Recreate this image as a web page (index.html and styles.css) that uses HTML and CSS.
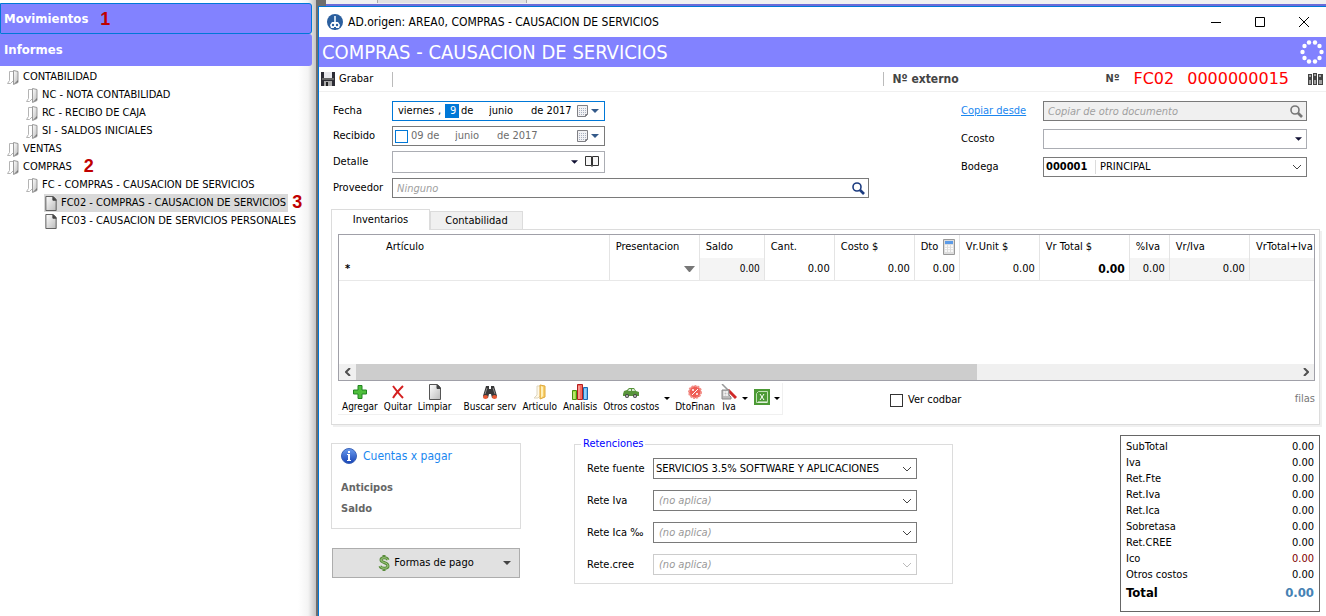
FILE: index.html
```html
<!DOCTYPE html>
<html lang="es">

<head>
  <meta charset="UTF-8">
  <meta name="viewport" content="width=device-width, initial-scale=1.0">
  <title>COMPRAS - CAUSACION DE SERVICIOS</title>
  <link rel="stylesheet" href="styles.css">
</head>

<body>
  <!-- iconos compartidos -->
  <svg class="sprite" aria-hidden="true">
    <defs>
      <linearGradient id="gris" x1="0" x2="1" y1="0" y2="1">
        <stop offset="0" stop-color="#fff"/>
        <stop offset="1" stop-color="#bbb"/>
      </linearGradient>
      <linearGradient id="azul" x1="0" x2="0" y1="0" y2="1">
        <stop offset="0" stop-color="#6a9cf0"/>
        <stop offset="1" stop-color="#1743b5"/>
      </linearGradient>
      <symbol id="i-folder" viewBox="0 0 12 15">
        <path d="M2.500 1.500h4v9l-3 3h-3l2-3z" fill="#fff" stroke="#b4b4b4"/>
        <path d="M6.500.500l4.500 1v11l-4.500 2z" fill="url(#gris)" stroke="#9a9a9a"/>
        <path d="M7 14l4-2v-2z" fill="#777"/>
      </symbol>
      <symbol id="i-page" viewBox="0 0 14 16">
        <path d="M1.500.500h8l3 3v12h-11z" fill="url(#gris)" stroke="#555"/>
        <path d="M9 1v3.500h3.500z" fill="#444" stroke="#444"/>
      </symbol>
      <symbol id="i-chevron" viewBox="0 0 10 6">
        <path d="M1 1l4 4 4-4" fill="none" stroke="currentColor"/>
      </symbol>
      <symbol id="i-arrow" viewBox="0 0 8 4">
        <path d="M0 0h8L4 4z" fill="currentColor"/>
      </symbol>
      <symbol id="i-calendar" viewBox="0 0 12 13">
        <path d="M.5.500h10v9l-2 2h-8z" fill="#f2f2f4" stroke="#7f7f84"/>
        <path d="M2 3.500h7M2 5.500h7M2 7.500h7M2 9.500h5" stroke="#a8b0c0" stroke-dasharray="1 1" fill="none"/>
        <path d="M8.500 11.500v-2h2" fill="none" stroke="#7f7f84"/>
      </symbol>
      <symbol id="i-search" viewBox="0 0 13 13">
        <circle cx="5" cy="5" r="4" fill="none" stroke="currentColor" stroke-width="1.6"/>
        <path d="M8 8l4 4" stroke="currentColor" stroke-width="2.6"/>
      </symbol>
    </defs>
  </svg>

  <nav class="sidebar">
    <button class="section active">Movimientos <span class="step">1</span></button>
    <button class="section">Informes</button>
    <ul class="tree">
      <li><a href="#"><svg class="ico"><use href="#i-folder"/></svg>CONTABILIDAD</a>
        <ul>
          <li><a href="#"><svg class="ico"><use href="#i-folder"/></svg>NC - NOTA CONTABILIDAD</a></li>
          <li><a href="#"><svg class="ico"><use href="#i-folder"/></svg>RC - RECIBO DE CAJA</a></li>
          <li><a href="#"><svg class="ico"><use href="#i-folder"/></svg>SI - SALDOS INICIALES</a></li>
        </ul>
      </li>
      <li><a href="#"><svg class="ico"><use href="#i-folder"/></svg>VENTAS</a></li>
      <li><a href="#"><svg class="ico"><use href="#i-folder"/></svg>COMPRAS</a><span class="step">2</span>
        <ul>
          <li><a href="#"><svg class="ico"><use href="#i-folder"/></svg>FC - COMPRAS - CAUSACION DE SERVICIOS</a>
            <ul>
              <li><a href="#" class="selected"><svg class="ico"><use href="#i-page"/></svg>FC02 - COMPRAS - CAUSACION DE SERVICIOS</a><span class="step near">3</span></li>
              <li><a href="#"><svg class="ico"><use href="#i-page"/></svg>FC03 - CAUSACION DE SERVICIOS PERSONALES</a></li>
            </ul>
          </li>
        </ul>
      </li>
    </ul>
  </nav>

  <div class="desktop">
    <div class="behind"><div class="behind-tab"></div></div>
    <main class="window">
      <header class="titlebar">
        <svg class="app-logo" width="16" height="16" viewBox="0 0 16 16">
          <circle cx="8" cy="8" r="8" fill="#2b5f9e"/>
          <path d="M7.500 2v7M8.500 2v7" stroke="#c5d8ec" fill="none"/>
          <path d="M5 8h6l2 3-1 3H4l-1-3z" fill="#fff"/>
          <circle cx="6" cy="11" r="1.200" fill="#2b5f9e"/>
          <circle cx="10" cy="11" r="1.200" fill="#2b5f9e"/>
          <path d="M7 13h2v3H7z" fill="#2b5f9e"/>
        </svg>
        <span class="caption">AD.origen: AREA0, COMPRAS - CAUSACION DE SERVICIOS</span>
        <div class="win-buttons">
          <button aria-label="Minimizar"><svg width="11" height="11"><path d="M0 5.500h10" stroke="#000"/></svg></button>
          <button aria-label="Maximizar"><svg width="11" height="11"><path d="M.5.500h9v9h-9z" fill="none" stroke="#000"/></svg></button>
          <button aria-label="Cerrar"><svg width="11" height="11"><path d="M0 0l10 10M10 0L0 10" stroke="#000"/></svg></button>
        </div>
      </header>

      <div class="banner">
        <h1>COMPRAS - CAUSACION DE SERVICIOS</h1>
        <svg width="24" height="24" viewBox="0 0 24 24" fill="#fff">
          <circle cx="9" cy="2.500" r="2.200"/><circle cx="15" cy="2.500" r="2.200"/>
          <circle cx="19.500" cy="6" r="2.200"/><circle cx="21.500" cy="12" r="2.200"/>
          <circle cx="19.500" cy="18" r="2.200"/><circle cx="15" cy="21.500" r="2.200"/>
          <circle cx="9" cy="21.500" r="2.200"/><circle cx="4.500" cy="18" r="2.200"/>
          <circle cx="2.500" cy="12" r="2.200"/><circle cx="4.500" cy="6" r="2.200"/>
        </svg>
      </div>

      <div class="topbar">
        <button class="save">
          <svg width="14" height="14" viewBox="0 0 14 14">
            <path d="M0 0h14v14H0z" fill="#2c2c34"/>
            <path d="M3 0h8v6H3z" fill="#e8e8ec"/>
            <path d="M3 9h8v5H3z" fill="#aaa"/>
            <path d="M5 10h2v4H5z" fill="#222"/>
            <path d="M1 6h12v2H1z" fill="#666"/>
          </svg>
          Grabar
        </button>
        <div class="externo">Nº externo</div>
        <div class="numero">Nº</div>
        <div class="doc"><span>FC02</span><span>0000000015</span></div>
        <svg class="books" width="15" height="12" viewBox="0 0 15 12">
          <path d="M0 1h4v11H0zM5 0h4v12H5zM10 1h5v11h-5z" fill="#444"/>
          <path d="M1 3h2M6 2h2M11 3h2M1 8h2M6 8h2M11 8h3M1 10h2M6 10h2M11 10h3" stroke="#fff"/>
        </svg>
      </div>

      <form class="data">
        <div class="col-left">
          <label for="fecha-dia">Fecha</label>
          <div class="field date focus">
            <input class="weekday" value="viernes" aria-label="Día de la semana"><span class="comma">,</span>
            <input id="fecha-dia" class="day marked" value="9"><span class="de">de</span>
            <input class="month" value="junio" aria-label="Mes"><span>de</span>
            <input class="year" value="2017" aria-label="Año">
            <button type="button" class="pick" aria-label="Calendario"><svg width="12" height="13"><use href="#i-calendar"/></svg><svg width="8" height="4"><use href="#i-arrow"/></svg></button>
          </div>

          <label for="recibido">Recibido</label>
          <div class="field date off">
            <input type="checkbox" id="recibido">
            <input class="day" value="09" aria-label="Día"><span class="de">de</span>
            <input class="month" value="junio" aria-label="Mes"><span>de</span>
            <input class="year" value="2017" aria-label="Año">
            <button type="button" class="pick" aria-label="Calendario"><svg width="12" height="13"><use href="#i-calendar"/></svg><svg width="8" height="4"><use href="#i-arrow"/></svg></button>
          </div>

          <label for="detalle">Detalle</label>
          <div class="field soft detail">
            <select id="detalle"><option></option></select>
            <svg class="mark" width="7" height="4"><use href="#i-arrow"/></svg>
            <button type="button" class="book" aria-label="Detalles">
              <svg width="15" height="12" viewBox="0 0 15 12"><path d="M.5.500h6v9h-6zM7.500.500h6v9h-6zM7 1v10" fill="#f6f6f6" stroke="#333"/></svg>
            </button>
          </div>

          <label for="proveedor">Proveedor</label>
          <div class="field wide">
            <input id="proveedor" placeholder="Ninguno">
            <button type="button" class="find" aria-label="Buscar proveedor"><svg width="13" height="13"><use href="#i-search"/></svg></button>
          </div>
        </div>

        <div class="col-right">
          <a href="#">Copiar desde</a>
          <div class="field copy">
            <input placeholder="Copiar de otro documento" aria-label="Copiar desde">
            <button type="button" class="find" aria-label="Buscar documento"><svg width="13" height="13"><use href="#i-search"/></svg></button>
          </div>
          <label for="ccosto">Ccosto</label>
          <div class="field soft">
            <select id="ccosto"><option></option></select>
            <svg class="mark" width="7" height="4"><use href="#i-arrow"/></svg>
          </div>
          <label for="bodega">Bodega</label>
          <div class="field">
            <b class="code">000001</b>
            <select id="bodega" class="store"><option>PRINCIPAL</option></select>
            <svg class="mark" width="10" height="6"><use href="#i-chevron"/></svg>
          </div>
        </div>
      </form>

      <div class="tabs">
        <button class="tab current">Inventarios</button>
        <button class="tab">Contabilidad</button>
      </div>
      <section class="panel">
        <div class="grid">
          <table>
            <colgroup>
              <col class="w-mark"><col class="w-art"><col class="w-big"><col class="w-saldo"><col class="w-cant"><col class="w-mid">
              <col class="w-dto"><col class="w-mid"><col class="w-big"><col class="w-iva"><col class="w-mid"><col class="w-mid">
            </colgroup>
            <thead>
              <tr>
                <th class="bare"></th>
                <th>Artículo</th>
                <th>Presentacion</th>
                <th>Saldo</th>
                <th>Cant.</th>
                <th>Costo $</th>
                <th><span class="calc">Dto <svg width="12" height="16" viewBox="0 0 12 16"><path d="M.5.500h11v15H.5z" fill="#ddd" stroke="#999"/><path d="M2 2h8v3H2z" fill="#5b9be8"/><path d="M2 7h8M2 9.500h8M2 12h8" stroke="#fff" stroke-width="1.500" stroke-dasharray="2 1"/></svg></span></th>
                <th>Vr.Unit $</th>
                <th>Vr Total $</th>
                <th>%Iva</th>
                <th>Vr/Iva</th>
                <th>VrTotal+Iva</th>
              </tr>
            </thead>
            <tbody>
              <tr>
                <td class="bare star">*</td>
                <td></td>
                <td><svg width="11" height="6" viewBox="0 0 11 6"><path d="M0 0h11L6 6H5z" fill="#777"/></svg></td>
                <td class="ro small">0.00</td>
                <td>0.00</td>
                <td>0.00</td>
                <td>0.00</td>
                <td>0.00</td>
                <td class="strong">0.00</td>
                <td class="ro">0.00</td>
                <td class="ro">0.00</td>
                <td class="ro"></td>
              </tr>
            </tbody>
          </table>
          <div class="scroll">
            <button aria-label="Izquierda"><svg width="6" height="8"><path d="M5 0L1 4l4 4" fill="none" stroke="#505050" stroke-width="2"/></svg></button>
            <div class="track"><div class="thumb"></div></div>
            <button aria-label="Derecha"><svg width="6" height="8"><path d="M1 0l4 4-4 4" fill="none" stroke="#505050" stroke-width="2"/></svg></button>
          </div>
        </div>

        <div class="actions">
          <div class="tools">
            <button><svg width="16" height="16" viewBox="0 0 16 16"><path d="M6 1.500h4V6h4.500v4H10v4.500H6V10H1.500V6H6z" fill="#4fbf3c" stroke="#238423"/></svg>Agregar</button>
            <button><svg width="16" height="16" viewBox="0 0 16 16"><path d="M3 2c3 4 6 8 10 12M13 2C9 6 6 9 3 14" fill="none" stroke="#d42020" stroke-width="2"/></svg>Quitar</button>
            <button><svg width="16" height="16" viewBox="0 0 14 16"><use href="#i-page"/></svg>Limpiar</button>
            <span class="sep"></span>
            <button><svg width="16" height="16" viewBox="0 0 16 16"><path d="M4 2h3v3h2V2h3l3 10-1 2h-4l-1-4H7l-1 4H2l-1-2z" fill="#383838"/><ellipse cx="3.500" cy="13" rx="2.500" ry="2" fill="#e85a35"/><ellipse cx="12.500" cy="13" rx="2.500" ry="2" fill="#e85a35"/><path d="M5 4l-2 6M11 4l2 6" stroke="#888"/></svg>Buscar serv</button>
            <button><svg width="16" height="16" viewBox="0 0 16 16"><path d="M5 2h4v9l-3 3H2l3-3z" fill="#fff8e5" stroke="#ddd5c0"/><path d="M8 1l5 1v11l-5 2z" fill="#f9cf68" stroke="#dfa93c"/><path d="M9 2l2 1v9l-2 2z" fill="#fff0b8"/></svg>Articulo</button>
            <button><svg width="16" height="16" viewBox="0 0 16 16"><path d="M.5 6.500h4v9h-4z" fill="#9bdc35" stroke="#478f14"/><path d="M5.500.500h5v15h-5z" fill="#f56b61" stroke="#b51e1e"/><path d="M11.500 3.500h4v12h-4z" fill="#67baf5" stroke="#1c69b0"/><path d="M2 8v7M7 2v13M13 5v10" stroke="#fff" stroke-opacity=".6"/></svg>Analisis</button>
            <button><svg width="16" height="16" viewBox="0 0 16 16"><path d="M0 10l1-3 3-1 2-2h5l2 3 3 1v4H0z" fill="#58943b"/><path d="M5 7l1-2h2v2zM9 7V5h2l1 2z" fill="#d5e8ce"/><circle cx="4" cy="12" r="2" fill="#444"/><circle cx="12" cy="12" r="2" fill="#444"/><circle cx="4" cy="12" r="1" fill="#ccc"/><circle cx="12" cy="12" r="1" fill="#ccc"/></svg>Otros costos</button>
            <button class="drop" aria-label="Más costos"><svg width="6" height="3" viewBox="0 0 8 4"><use href="#i-arrow"/></svg></button>
            <button><svg width="16" height="16" viewBox="0 0 16 16"><circle cx="8" cy="8" r="6" fill="#ef5d55" stroke="#f28f88" stroke-width="2" stroke-dasharray="2 1"/><path d="M5 11l6-6" stroke="#fff"/><circle cx="6" cy="6" r="1" fill="#fff"/><circle cx="10" cy="10" r="1" fill="#fff"/></svg>DtoFinan</button>
            <button><svg width="16" height="16" viewBox="0 0 16 16"><path d="M1 0l7 7" stroke="#999" stroke-width="1.500"/><path d="M7 6l8 8" stroke="#cf2828" stroke-width="3"/><path d="M1 6h7v5l2 2v2H1z" fill="#bbb" stroke="#888"/><path d="M3 8h4M3 11h4M3 7v5M6 7v5" stroke="#fff"/></svg>Iva</button>
            <button class="drop" aria-label="Opciones de Iva"><svg width="6" height="3" viewBox="0 0 8 4"><use href="#i-arrow"/></svg></button>
            <button class="excel" aria-label="Excel"><svg width="16" height="16" viewBox="0 0 16 16"><path d="M0 0h16v16H0z" fill="#4c9a35"/><path d="M2.500 4.500l2-2h9v11h-11z" fill="none" stroke="#bfe0b4"/><path d="M6 5l4 6M10 5l-4 6M4 13h9" stroke="#fff" fill="none"/></svg></button>
            <button class="drop" aria-label="Opciones de Excel"><svg width="6" height="3" viewBox="0 0 8 4"><use href="#i-arrow"/></svg></button>
          </div>
          <label class="codbar"><input type="checkbox"> Ver codbar</label>
          <span class="filas">filas</span>
        </div>
      </section>

      <div class="bottom">
        <div class="payments">
          <div class="cxp">
            <h2><svg width="16" height="16" viewBox="0 0 16 16"><circle cx="8" cy="8" r="7.500" fill="url(#azul)" stroke="#3c64b8"/><path d="M7 3h2v2H7zM6 6h3v6h1v1H6v-1h1V7H6z" fill="#fff"/></svg>Cuentas x pagar</h2>
            <p>Anticipos</p>
            <p>Saldo</p>
          </div>
          <button class="pay">
            <svg width="12" height="16" viewBox="0 0 12 16"><path d="M10 5C9 2 3 2 3 5c0 3 7 2 7 6 0 3-7 3-8 0M6 0v3M6 13v3" fill="none" stroke="#5a8c3c" stroke-width="3"/><path d="M10 5C9 2 3 2 3 5c0 3 7 2 7 6 0 3-7 3-8 0" fill="none" stroke="#a5cf84"/></svg>
            Formas de pago
            <svg class="mark" width="8" height="4"><use href="#i-arrow"/></svg>
          </button>
        </div>

        <fieldset>
          <legend>Retenciones</legend>
          <label for="rete-fuente">Rete fuente</label>
          <div class="field"><select id="rete-fuente"><option>SERVICIOS 3.5% SOFTWARE Y APLICACIONES</option></select><svg class="mark" width="10" height="6"><use href="#i-chevron"/></svg></div>
          <label for="rete-iva">Rete Iva</label>
          <div class="field"><select id="rete-iva" class="none"><option>(no aplica)</option></select><svg class="mark" width="10" height="6"><use href="#i-chevron"/></svg></div>
          <label for="rete-ica">Rete Ica ‰</label>
          <div class="field"><select id="rete-ica" class="none"><option>(no aplica)</option></select><svg class="mark" width="10" height="6"><use href="#i-chevron"/></svg></div>
          <label for="rete-cree">Rete.cree</label>
          <div class="field disabled"><select id="rete-cree" class="none" disabled><option>(no aplica)</option></select><svg class="mark" width="10" height="6"><use href="#i-chevron"/></svg></div>
        </fieldset>

        <div class="totals">
          <table>
            <tr><th>SubTotal</th><td>0.00</td></tr>
            <tr><th>Iva</th><td>0.00</td></tr>
            <tr><th>Ret.Fte</th><td>0.00</td></tr>
            <tr><th>Ret.Iva</th><td>0.00</td></tr>
            <tr><th>Ret.Ica</th><td>0.00</td></tr>
            <tr><th>Sobretasa</th><td>0.00</td></tr>
            <tr><th>Ret.CREE</th><td>0.00</td></tr>
            <tr><th>Ico</th><td class="ico-value">0.00</td></tr>
            <tr><th>Otros costos</th><td>0.00</td></tr>
            <tr class="total"><th>Total</th><td>0.00</td></tr>
          </table>
        </div>
      </div>
    </main>
  </div>
</body>

</html>
```
FILE: styles.css
```css
:root {
  --purple: #8282ff;
  --blue: #0078d7;
  --border: #7a7a7a;
  --line: #dcdcdc;
  --soft: #abadb3;
}

* {
  box-sizing: border-box;
}

body {
  margin: 0;
  display: flex;
  min-height: 100vh;
  font-family: Tahoma, "DejaVu Sans Condensed", "DejaVu Sans", sans-serif;
  font-size: 11px;
  line-height: 14px;
  color: #000;
  background: #fff;
  overflow: hidden;
}

button,
input,
select {
  font: inherit;
  color: inherit;
  margin: 0;
  padding: 0;
  border: 0;
  background: none;
  border-radius: 0;
}

input,
select {
  min-width: 0;
  outline: none;
}

select {
  appearance: none;
}

svg {
  flex: none;
}

.sprite {
  position: absolute;
  width: 0;
  height: 0;
}

/* menú lateral */
.sidebar {
  flex: 0 0 316px;
  padding: 3px 4px 0 0;
  background: linear-gradient(to left, #c4c4c4, #f4f4f4 8px, #fff 18px);
}

.section {
  display: flex;
  align-items: center;
  width: 100%;
  height: 32px;
  padding: 0 4px;
  font-size: 13px;
  font-weight: bold;
  color: #fff;
  background: var(--purple);
  border-radius: 0 3px 3px 0;
}

.section.active {
  height: 31px;
  padding: 0 3px;
  border: 1px solid var(--blue);
}

.step {
  margin-left: 8px;
  font-family: Arial, "Liberation Sans", sans-serif;
  font-size: 18px;
  font-weight: bold;
  color: #c00000;
}

.section .step {
  margin-left: 12px;
}

.step.near {
  margin-left: 4px;
}

.tree,
.tree ul {
  list-style: none;
  margin: 0;
  padding: 0;
}

.tree {
  padding: 2px 0 0 6px;
}

.tree ul {
  padding-left: 19px;
}

.tree li {
  white-space: nowrap;
}

.tree li > .step {
  display: inline-block;
  height: 18px;
  line-height: 16px;
  vertical-align: top;
}

.tree a {
  display: inline-flex;
  align-items: center;
  height: 18px;
  padding: 0 4px 0 0;
  color: #000;
  text-decoration: none;
  vertical-align: top;
}

.tree a.selected {
  padding-right: 2px;
  background: #d9d9d9;
}

.ico {
  width: 14px;
  height: 15px;
  margin-right: 3px;
}

/* ventana */
.desktop {
  flex: 1;
  min-width: 0;
  display: flex;
  flex-direction: column;
  background: #6e6e6e;
}

.behind {
  height: 6px;
  margin-left: 10px;
  padding-left: 51px;
  background: #f0f0f0;
  border-bottom: 2px solid #6b6bd8;
}

.behind-tab {
  width: 150px;
  height: 3px;
  background: #e1e1e1;
  border: solid #aaa;
  border-width: 0 1px;
}

.window {
  flex: 1;
  margin-left: 2px;
  background: #fff;
  border: solid var(--blue);
  border-width: 1px 0 0 1px;
}

.titlebar {
  display: flex;
  align-items: center;
  height: 30px;
  padding-left: 8px;
}

.caption {
  flex: 1;
  margin-left: 5px;
  font-size: 12px;
}

.win-buttons {
  display: flex;
}

.win-buttons button {
  width: 44px;
  height: 29px;
  line-height: 0;
}

.banner {
  display: flex;
  align-items: center;
  justify-content: space-between;
  height: 30px;
  padding: 0 2px 0 3px;
  color: #fff;
  background: var(--purple);
}

h1 {
  margin: 0;
  font-size: 20px;
  font-weight: normal;
}

.topbar {
  display: flex;
  align-items: center;
  height: 25px;
  padding: 0 3px 0 2px;
  border-bottom: 1px solid #f0f0f0;
  color: #444;
}

.save {
  display: flex;
  align-items: center;
  gap: 4px;
  width: 72px;
  height: 15px;
  color: #000;
  border-right: 1px solid #bbb;
}

.externo {
  margin-left: auto;
  padding-left: 9px;
  font-size: 12px;
  font-weight: bold;
  border-left: 1px solid #bbb;
}

.numero {
  margin-left: 147px;
  font-weight: bold;
}

.doc {
  display: flex;
  gap: 13px;
  margin: 0 19px 0 14px;
  font-size: 16px;
  font-family: Verdana, "DejaVu Sans", sans-serif;
  color: #f00;
}

/* datos del documento */
.data {
  display: flex;
  justify-content: space-between;
  padding: 9px 19px 11px 14px;
}

.col-left,
.col-right {
  display: grid;
  align-items: center;
}

.col-left {
  grid-template-columns: 59px 477px;
  row-gap: 5px;
}

.col-right {
  grid-template-columns: 82px 264px;
  row-gap: 8px;
  align-content: start;
}

.col-right a {
  color: #1a87f0;
}

.field {
  position: relative;
  display: flex;
  align-items: center;
  width: 213px;
  height: 20px;
  background: #fff;
  border: 1px solid var(--border);
}

.field.detail {
  height: 22px;
}

.field.wide,
.col-right .field {
  width: 100%;
}

.field > select,
.wide input,
.copy input {
  flex: 1;
  height: 100%;
  padding-left: 4px;
}

.field.focus {
  border-color: var(--blue);
}

.field.soft {
  border-color: var(--soft);
}

.field.off {
  color: #6d6d6d;
}

.field ::placeholder {
  font-style: italic;
  color: #a0a0a0;
  opacity: 1;
}

.field.copy {
  background: #f0f0f0;
}

.copy .find {
  color: #777;
}

.mark {
  position: absolute;
  right: 4px;
  pointer-events: none;
  color: #444;
}

.soft .mark {
  color: #113;
}

.detail .mark {
  right: 26px;
}

.date {
  padding-left: 5px;
}

.date.off {
  padding-left: 2px;
}

.weekday {
  width: 40px;
}

.comma {
  width: 7px;
}

.day {
  width: 14px;
}

.marked {
  padding-left: 5px;
  color: #fff;
  background: var(--blue);
}

.de {
  width: 30px;
  padding-left: 2px;
}

.month {
  width: 42px;
}

.year {
  width: 30px;
  margin-left: 3px;
}

.pick {
  display: flex;
  align-items: center;
  gap: 2px;
  margin-left: auto;
  padding-right: 5px;
  color: #345a8a;
}

.book {
  padding-right: 4px;
  line-height: 0;
}

.find {
  padding-right: 3px;
  line-height: 0;
  color: #1c3c80;
}

input[type="checkbox"] {
  appearance: none;
  width: 13px;
  height: 13px;
  border: 1px solid #333;
  background: #fff;
}

.off input[type="checkbox"] {
  border-color: var(--blue);
  margin-right: 3px;
}

.code {
  width: 52px;
  padding-left: 2px;
  border-right: 1px solid var(--line);
}

/* pestañas */
.tabs {
  display: flex;
  align-items: flex-end;
  padding-left: 12px;
}

.tab {
  width: 93px;
  height: 18px;
  background: #f0f0f0;
  border: 1px solid var(--line);
  border-bottom: 0;
}

.tab.current {
  position: relative;
  width: 99px;
  height: 21px;
  margin-bottom: -1px;
  background: #fff;
}

.panel {
  margin: 0 6px 0 12px;
  padding: 4px 4px 9px 6px;
  border: 1px solid var(--line);
  box-shadow: 2px 2px 0 #f0f0f0;
}

.grid {
  height: 147px;
  display: flex;
  flex-direction: column;
  justify-content: space-between;
  overflow: hidden;
  border: 1px solid #a0a0a8;
}

.grid table {
  width: 991px;
  table-layout: fixed;
  border-collapse: collapse;
}

.w-mark { width: 41px; }
.w-art { width: 229px; }
.w-big { width: 90px; }
.w-saldo { width: 65px; }
.w-cant { width: 70px; }
.w-mid { width: 80px; }
.w-dto { width: 45px; }
.w-iva { width: 40px; }

.grid th,
.grid td {
  padding: 0 4px 0 6px;
  white-space: nowrap;
  border-right: 1px solid #e4e4e4;
}

.grid th {
  height: 23px;
  font-weight: normal;
  text-align: left;
}

.grid td {
  height: 22px;
  text-align: right;
  border-bottom: 1px solid #e8e8e8;
}

.grid .bare {
  border-right: 0;
}

.grid .star {
  text-align: left;
  font-weight: bold;
}

.grid .ro {
  background: #f4f4f4;
}

.grid .small {
  font-size: 10px;
}

.grid .strong {
  font-size: 12px;
  font-weight: bold;
}

.calc {
  display: flex;
  align-items: center;
  gap: 5px;
}

.scroll {
  display: flex;
  height: 16px;
  background: #f0f0f0;
}

.scroll button {
  width: 17px;
  line-height: 0;
}

.track {
  flex: 1;
}

.thumb {
  width: 66%;
  height: 100%;
  background: #cdcdcd;
}

.actions {
  display: flex;
  align-items: flex-start;
  padding-top: 2px;
}

.tools {
  display: flex;
  height: 32px;
  width: 445px;
  padding-left: 1px;
  border: solid #f0f0f0;
  border-width: 0 1px 1px 0;
}

.tools button {
  display: flex;
  flex-direction: column;
  align-items: center;
  padding: 1px 3px 0;
  font-size: 10px;
  white-space: nowrap;
}

.tools .drop {
  justify-content: center;
  padding: 0 2px;
}

.tools .excel {
  padding: 6px 2px 0 4px;
}

.sep {
  width: 1px;
  height: 24px;
  margin: 4px 3px;
  background: #bbb;
}

.codbar {
  display: flex;
  align-items: center;
  gap: 5px;
  margin: 10px 0 0 107px;
}

.filas {
  margin: 9px 0 0 auto;
  color: #777;
}

/* parte inferior */
.bottom {
  display: flex;
  align-items: flex-start;
  padding: 10px 6px 4px 12px;
}

.payments {
  width: 190px;
  margin: 8px 53px 0 0;
}

.cxp {
  height: 86px;
  padding: 4px 9px;
  border: 1px solid var(--line);
}

.cxp h2 {
  display: flex;
  align-items: center;
  gap: 6px;
  margin: 0 0 17px;
  font-size: 12px;
  font-weight: normal;
  color: #1a87f0;
}

.cxp p {
  margin: 0 0 7px;
  font-weight: bold;
  color: #666;
}

.pay {
  position: relative;
  display: flex;
  align-items: center;
  justify-content: center;
  gap: 4px;
  width: 188px;
  height: 30px;
  margin: 19px 1px 0;
  background: #e1e1e1;
  border: 1px solid #adadad;
}

.pay .mark {
  right: 8px;
}

fieldset {
  display: grid;
  grid-template-columns: 66px 264px;
  gap: 11px 0;
  align-items: center;
  width: 379px;
  margin: 2px 0 0;
  padding: 7px 0 8px 12px;
  border: 1px solid var(--line);
}

legend {
  margin-left: -6px;
  padding: 0 2px;
  color: #00f;
}

fieldset .field {
  width: 264px;
  height: 21px;
}

fieldset .field > select {
  padding-left: 2px;
}

.field > select.none {
  padding-left: 5px;
  font-style: italic;
  color: #999;
  opacity: 1;
}

.disabled {
  border-color: #ccc;
}

.disabled .mark {
  color: #bbb;
}

.totals {
  width: 200px;
  height: 177px;
  margin-left: auto;
  padding: 3px 5px;
  border: 1px solid #666;
}

.totals table {
  width: 100%;
  border-collapse: collapse;
}

.totals th,
.totals td {
  height: 16px;
  padding: 0;
  font-weight: normal;
  text-align: left;
}

.totals td {
  text-align: right;
}

.totals .ico-value {
  color: #800000;
}

.totals .total th,
.totals .total td {
  height: 20px;
  font-size: 13px;
  font-weight: bold;
}

.totals .total td {
  color: #4682b4;
}
```
